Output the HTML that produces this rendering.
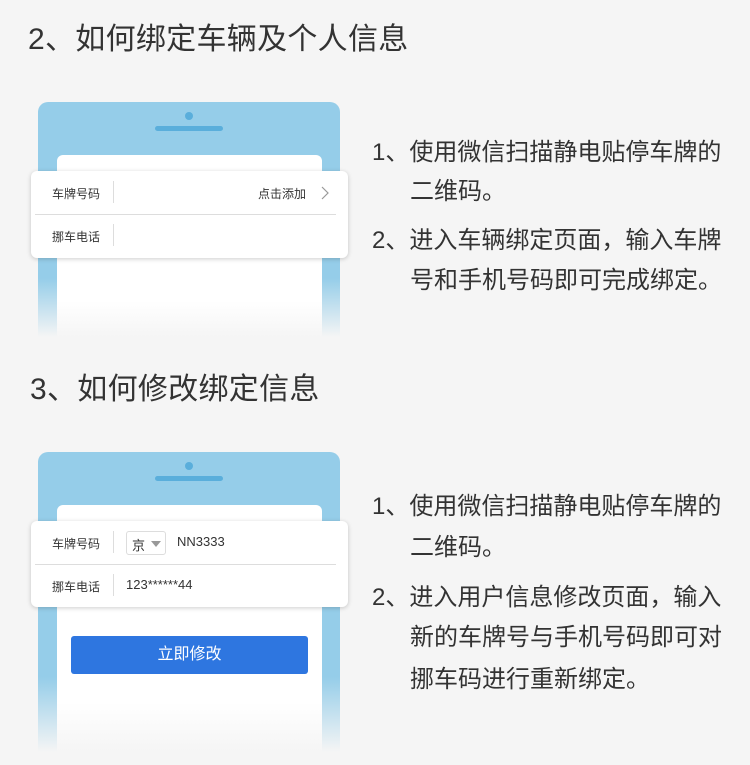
<!DOCTYPE html>
<html><head><meta charset="utf-8"><style>
*{margin:0;padding:0;box-sizing:border-box}
body{width:750px;height:765px;background:#f5f5f5;position:relative;overflow:hidden;font-family:"Liberation Sans","Noto Sans CJK SC",sans-serif;color:#333}
.abs{position:absolute;white-space:nowrap}
.h{font-size:30px;color:#333;line-height:36px;letter-spacing:0.3px}
.t{font-size:24px;line-height:30px;color:#333}
.phone{position:absolute;left:38px;width:302px;border-radius:10px 10px 0 0;background:linear-gradient(#95cde9 0,#95cde9 75%,rgba(149,205,233,0) 100%)}
.dot{position:absolute;left:147px;top:10px;width:8px;height:8px;border-radius:50%;background:#5aaedb}
.bar{position:absolute;left:117px;top:24px;width:68px;height:5px;border-radius:3px;background:#5aaedb}
.scr{position:absolute;left:19px;width:265px;border-radius:6px 6px 0 0;background:linear-gradient(#fff 0,#fff 80%,#f5f5f5 100%)}
.card{position:absolute;left:31px;width:317px;background:#fff;border-radius:6px;box-shadow:0 1px 5px rgba(0,0,0,.2)}
.row{position:absolute;left:0;width:100%;height:43px;font-size:12px;color:#333}
.lab{position:absolute;left:21px;top:14px}
.vl{position:absolute;left:82px;top:10px;width:1px;height:22px;background:#ddd}
.div{position:absolute;left:4px;right:12px;top:43px;height:1px;background:#ddd}
</style></head><body>
<div class="abs h" style="left:28px;top:22px">2、如何绑定车辆及个人信息</div>
<div class="phone" style="top:102px;height:235px"><div class="dot"></div><div class="bar"></div><div class="scr" style="top:53px;height:182px"></div></div>
<div class="card" style="top:171px;height:87px">
 <div class="row" style="top:0"><span class="lab">车牌号码</span><div class="vl"></div><span class="abs" style="right:42px;top:14px">点击添加</span>
 <svg class="abs" style="right:18px;top:14px" width="10" height="16" viewBox="0 0 10 16"><path d="M2 2l6 6-6 6" fill="none" stroke="#999" stroke-width="1.2"/></svg></div>
 <div class="div"></div>
 <div class="row" style="top:43px"><span class="lab">挪车电话</span><div class="vl"></div></div>
</div>
<div class="abs t" style="left:372px;top:138px">1、使用微信扫描静电贴停车牌的</div>
<div class="abs t" style="left:410px;top:177px">二维码。</div>
<div class="abs t" style="left:372px;top:226px">2、进入车辆绑定页面，输入车牌</div>
<div class="abs t" style="left:410px;top:266px">号和手机号码即可完成绑定。</div>

<div class="abs h" style="left:30px;top:372px">3、如何修改绑定信息</div>
<div class="phone" style="top:452px;height:300px"><div class="dot"></div><div class="bar"></div><div class="scr" style="top:53px;height:247px"></div></div>
<div class="card" style="top:521px;height:86px">
 <div class="row" style="top:0"><span class="lab">车牌号码</span><div class="vl"></div>
  <div class="abs" style="left:95px;top:10px;width:40px;height:24px;border:1px solid #ddd;border-radius:3px;font-size:13px;padding:3px 0 0 5px">京<svg class="abs" style="left:24px;top:9px" width="10" height="6"><path d="M0 0h10L5 6z" fill="#999"/></svg></div>
  <span class="abs" style="left:146px;top:13px;font-size:13px">NN3333</span></div>
 <div class="div"></div>
 <div class="row" style="top:43px"><span class="lab">挪车电话</span><div class="vl"></div><span class="abs" style="left:95px;top:13px;font-size:13px">123******44</span></div>
</div>
<div class="abs" style="left:71px;top:636px;width:237px;height:38px;background:#2e76e0;border-radius:3px;color:#fff;font-size:16px;text-align:center;line-height:38px">立即修改</div>
<div class="abs t" style="left:372px;top:492px">1、使用微信扫描静电贴停车牌的</div>
<div class="abs t" style="left:410px;top:533px">二维码。</div>
<div class="abs t" style="left:372px;top:583px">2、进入用户信息修改页面，输入</div>
<div class="abs t" style="left:410px;top:623px">新的车牌号与手机号码即可对</div>
<div class="abs t" style="left:410px;top:665px">挪车码进行重新绑定。</div>
</body></html>
